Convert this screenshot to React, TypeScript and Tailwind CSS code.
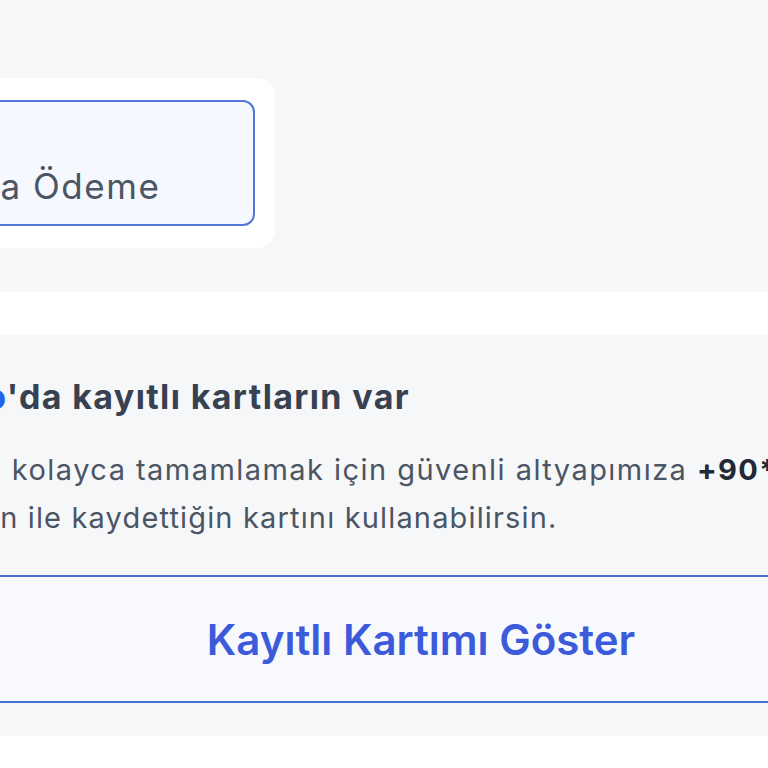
import React from 'react';

const font = { fontFamily: 'Inter, "Noto Sans", sans-serif' };

function PaymentOption() {
  return (
    <div className="bg-[#f6f7f9] pt-[78px] pb-[44px]">
      <div className="-ml-[142px] w-[417px] rounded-r-[18px] bg-white py-[22px] pl-[20px] pr-[20px]">
        <div className="flex h-[126px] flex-col justify-end rounded-[12px] border-2 border-[#5177d8] bg-[#f5f8fe] pb-[16px] pl-[18px]">
          <span className="whitespace-nowrap text-[35px] leading-[44px] tracking-[0.045em] text-[#4b5563]">Kapıda Ödeme</span>
        </div>
      </div>
    </div>
  );
}

function SavedCards() {
  return (
    <div className="mt-[43px] bg-[#f6f7f9] pt-[42px] pb-[33px]">
      <div className="-ml-[100px] w-[1042px]">
        <h2 className="whitespace-nowrap text-[34px] font-bold leading-[40px] tracking-[0.04em] text-[#374151]">
          <span className="text-[#2563eb]">iyzico</span>'da kayıtlı kartların var
        </h2>
        <p className="-ml-[10px] mt-[29px] whitespace-nowrap text-[29px] leading-[48px] tracking-[0.04em] text-[#4b5563]">
          <span className="-ml-[3px] tracking-[0.05em]">
            İşlemini kolayca tamamlamak için güvenli altyapımıza <span className="font-bold text-[#1f2937]">+90*** *** ** 12</span>
          </span>
          <br />
          numaran ile kaydettiğin kartını kullanabilirsin.
        </p>
        <button className="mt-[33px] flex h-[128px] w-full items-center justify-center rounded-[12px] border-2 border-[#4a6fd6] bg-[#f7f9fd] text-[42px] font-semibold text-[#3b5bdb]">
          Kayıtlı Kartımı Göster
        </button>
      </div>
    </div>
  );
}

export default function App() {
  return (
    <div className="h-[768px] w-[768px] overflow-hidden bg-white" style={font}>
      <PaymentOption />
      <SavedCards />
    </div>
  );
}
